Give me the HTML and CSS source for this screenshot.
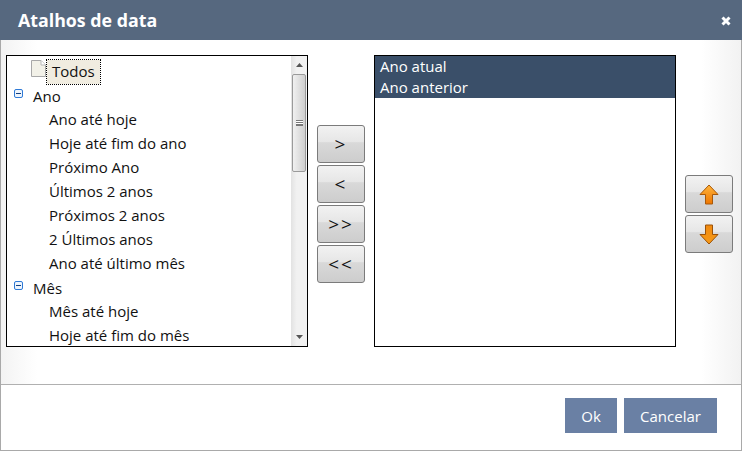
FILE: index.html
```html
<!DOCTYPE html>
<html lang="pt">
<head>
<meta charset="utf-8">
<title>Atalhos de data</title>
<link rel="stylesheet" href="styles.css">
</head>
<body>
<div class="dialog">
  <header class="titlebar">
    <h1 class="title">Atalhos de data</h1>
    <svg class="close" width="10" height="10" viewBox="0 0 10 10"><path d="M1.5 1.5L8.5 8.5M8.5 1.5L1.5 8.5" stroke="#fff" stroke-width="3" fill="none"/></svg>
  </header>
  <main class="content">
    <div class="listbox tree">
      <div class="tree-items">
        <div class="row root">
          <svg class="file" width="15" height="17" viewBox="0 0 15 17"><path d="M.5.5H10L14.500 5V16.500H.5Z" fill="#f2f1e8" stroke="#a8a8a8"/><path d="M10 .5V5H14.500" fill="#fff" stroke="#b8b8b8"/></svg>
          <span class="selected">Todos</span>
        </div>
        <div class="row group"><svg class="toggle" width="9" height="9" viewBox="0 0 9 9"><rect x=".5" y=".5" width="8" height="8" rx="1.500" fill="#eef5fd" stroke="#2f7ad6"/><path d="M2 4.500H7" stroke="#123f80"/></svg><span>Ano</span></div>
        <div class="row child">Ano até hoje</div>
        <div class="row child">Hoje até fim do ano</div>
        <div class="row child">Próximo Ano</div>
        <div class="row child">Últimos 2 anos</div>
        <div class="row child">Próximos 2 anos</div>
        <div class="row child">2 Últimos anos</div>
        <div class="row child">Ano até último mês</div>
        <div class="row group"><svg class="toggle" width="9" height="9" viewBox="0 0 9 9"><rect x=".5" y=".5" width="8" height="8" rx="1.500" fill="#eef5fd" stroke="#2f7ad6"/><path d="M2 4.500H7" stroke="#123f80"/></svg><span>Mês</span></div>
        <div class="row child">Mês até hoje</div>
        <div class="row child">Hoje até fim do mês</div>
      </div>
      <div class="scrollbar">
        <div class="arrow"><svg width="7" height="4" viewBox="0 0 7 4"><path d="M3.500 0L7 4H0Z" fill="#555"/></svg></div>
        <div class="thumb"><span class="grip"></span></div>
        <div class="track"></div>
        <div class="arrow"><svg width="7" height="4" viewBox="0 0 7 4"><path d="M0 0H7L3.500 4Z" fill="#555"/></svg></div>
      </div>
    </div>
    <div class="transfer">
      <button class="tool" type="button">&gt;</button>
      <button class="tool" type="button">&lt;</button>
      <button class="tool" type="button">&gt;&gt;</button>
      <button class="tool" type="button">&lt;&lt;</button>
    </div>
    <div class="listbox chosen">
      <div class="option">Ano atual</div>
      <div class="option">Ano anterior</div>
    </div>
    <div class="order">
      <button class="tool" type="button" aria-label="Subir"><svg width="20" height="21" viewBox="0 0 20 21"><defs><linearGradient id="au" x1="0" y1="0" x2="0" y2="1"><stop offset="0" stop-color="#ffb53d"/><stop offset="1" stop-color="#ee7600"/></linearGradient></defs><path d="M10 1L19 10.500H13.500V20H6.500V10.500H1Z" fill="url(#au)" stroke="#a8590a"/></svg></button>
      <button class="tool" type="button" aria-label="Descer"><svg width="20" height="21" viewBox="0 0 20 21"><defs><linearGradient id="ad" x1="0" y1="0" x2="0" y2="1"><stop offset="0" stop-color="#f08a10"/><stop offset="1" stop-color="#f79a18"/></linearGradient></defs><path d="M10 20L19 10.500H13.500V1H6.500V10.500H1Z" fill="url(#ad)" stroke="#9a520a"/></svg></button>
    </div>
  </main>
  <footer class="footer">
    <button class="action ok" type="button">Ok</button>
    <button class="action cancel" type="button">Cancelar</button>
  </footer>
</div>
</body>
</html>
```

FILE: styles.css
```css
* { box-sizing: border-box; }
html, body { margin: 0; padding: 0; background: #fff; }
body { width: 742px; height: 451px; overflow: hidden; font-family: "Open Sans", "Noto Sans", sans-serif; }
.dialog { width: 742px; height: 451px; display: flex; flex-direction: column; border: 1px solid #a9a9a9; border-top: 0; }
.titlebar { height: 40px; flex: none; background: #56687f; display: flex; align-items: center; justify-content: space-between; padding: 0 11px 0 18px; margin: 0 -1px; }
.title { margin: 0; font: bold 17.8px "Open Sans", "Noto Sans", sans-serif; color: #fff; }
.close { display: block; margin-top: 1px; }
.content { height: 344px; flex: none; display: flex; align-items: flex-start; padding: 15px 0 0 5px;
  background: linear-gradient(90deg, #f3f3f3 0, #fff 36px, #fff 700px, #f2f2f2 100%); }
.listbox { width: 302px; height: 292px; border: 1px solid #000; background: #fff; flex: none; font-size: 15px; color: #111; }
.tree { display: flex; overflow: hidden; }
.tree-items { flex: 1; min-width: 0; overflow: hidden; }
.row { height: 24px; line-height: 23px; white-space: nowrap; }
.root { display: flex; align-items: flex-end; height: 28px; padding-left: 24px; }
.file { margin-bottom: 7px; flex: none; }
.selected { margin-left: 1px; padding: 0 5px; height: 24px; line-height: 23px; background: #f0ece0; outline: 1px dotted #000; outline-offset: 0; }
.group { display: flex; align-items: center; padding-left: 7px; }
.toggle { flex: none; margin: -5px 10px 0 0; }
.child { padding-left: 42px; }
.scrollbar { width: 16px; flex: none; display: flex; flex-direction: column; background: linear-gradient(90deg, #e2e2e2, #f1f1f1 35%); }
.arrow { height: 18px; flex: none; display: flex; align-items: center; justify-content: center; }
.thumb { height: 98px; flex: none; margin: 0 1px; border: 1px solid #9a9a9a; border-radius: 2px; background: linear-gradient(90deg, #f0f0f0, #cfcfcf); display: flex; align-items: center; justify-content: center; }
.grip { width: 7px; height: 6px; border-top: 1px solid #777; border-bottom: 1px solid #777; background: linear-gradient(#fff 0 1px, #777 1px 2px, #fff 2px 3px, #777 3px 4px, #fff 4px); }
.track { flex: 1; }
.transfer { width: 48px; flex: none; margin: 70px 9px 0 9px; display: flex; flex-direction: column; gap: 2px; }
.order { width: 48px; flex: none; margin: 120px 0 0 9px; display: flex; flex-direction: column; gap: 2px; }
.tool { width: 48px; height: 38px; padding: 0; border: 1px solid #7b7b7b; border-radius: 3px; display: flex; align-items: center; justify-content: center; letter-spacing: 2px; font: 19px "Open Sans", sans-serif; color: #111; background: linear-gradient(#f2f2f2 0, #e6e6e6 45%, #d9d9d9 46%, #cdcdcd 100%); }
.chosen { padding: 0; }
.option { height: 21px; line-height: 21px; padding-left: 5px; color: #fff; background: #3a4f69; }
.footer { flex: 1; border-top: 1px solid #b0b0b0; display: flex; align-items: flex-start; justify-content: flex-end; gap: 7px; padding: 13px 24px 0 0; }
.action { height: 35px; padding: 0; border: 0; background: #6a80a4; color: #fff; font: 15px "Open Sans", sans-serif; }
.ok { width: 52px; }
.cancel { width: 93px; }
```
